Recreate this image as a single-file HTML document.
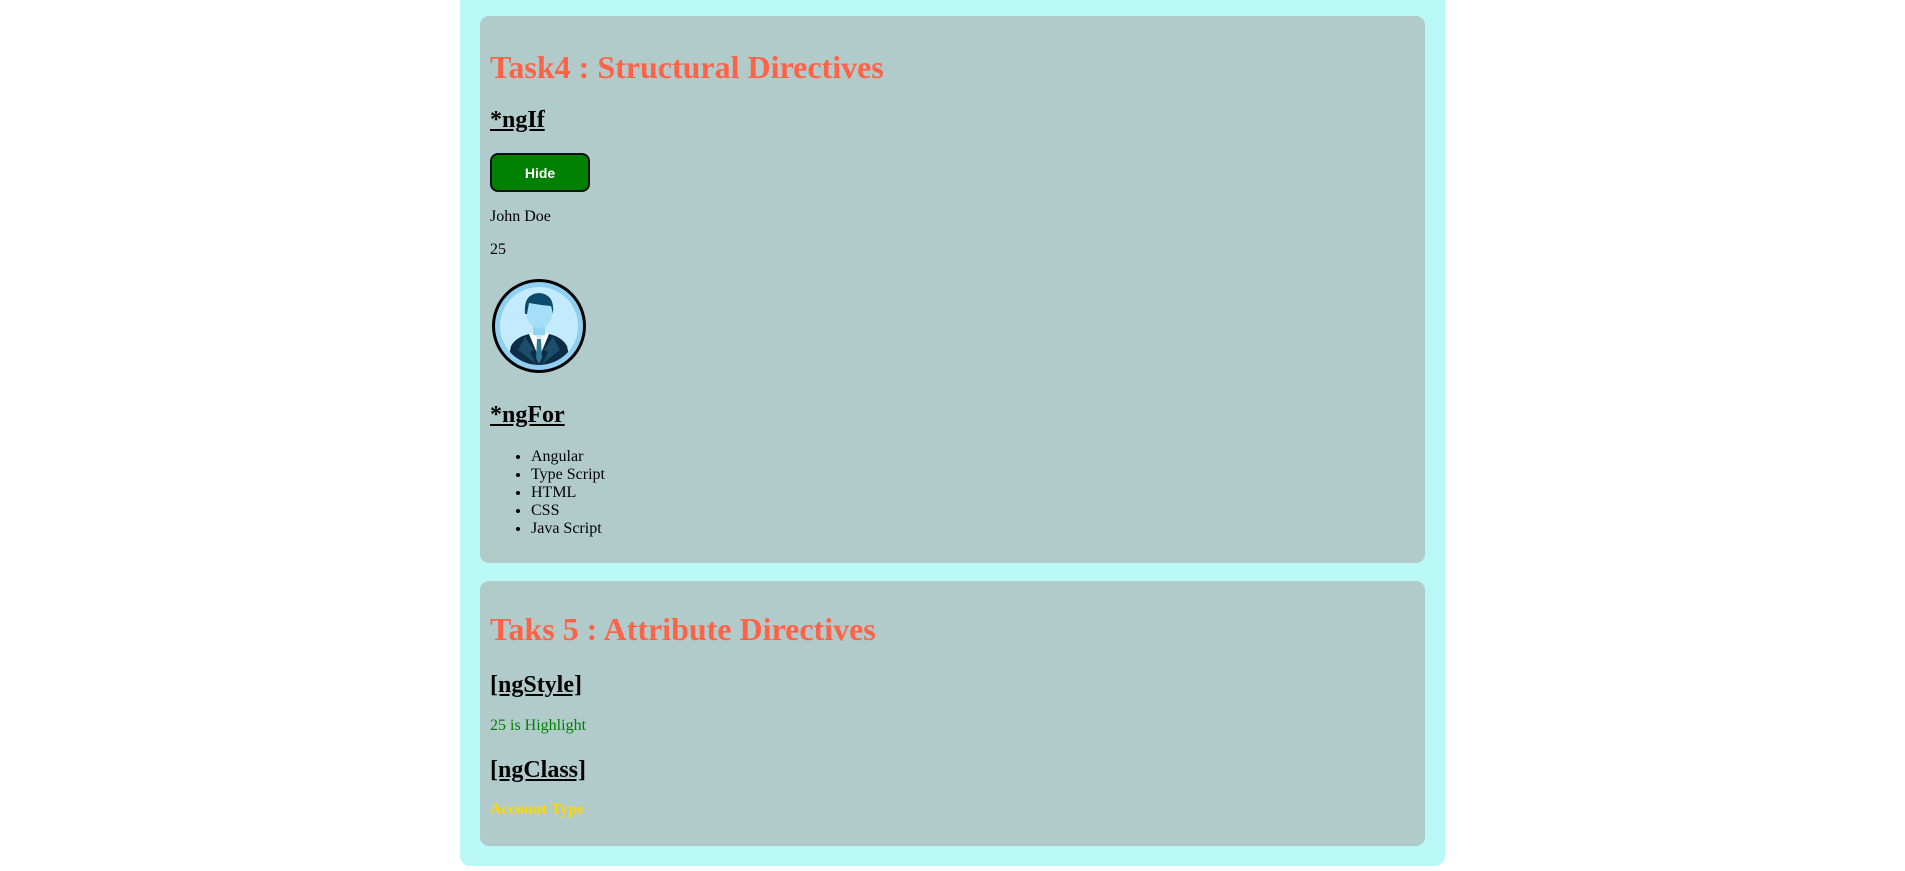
<!DOCTYPE html>
<html><head><meta charset="utf-8"><style>
body{margin:0;background:#fff;width:1905px;height:871px;position:relative;overflow:hidden;font-family:"Liberation Serif",serif;}
.outer{position:absolute;left:460px;top:0;width:985px;height:866px;background:#baf7f7;border-radius:0 0 10px 10px;}
.box{position:absolute;left:480px;width:945px;background:#b1cbcb;border-radius:9px;}
.t{position:absolute;left:490px;line-height:1;white-space:nowrap;margin:0;}
.h1{font-size:32px;font-weight:bold;color:#ff6347;}
.h2{font-size:24px;font-weight:bold;text-decoration:underline;color:#000;}
.p{font-size:16px;color:#000;}
.btn{position:absolute;left:490px;top:153px;width:100px;height:39px;box-sizing:border-box;background:#008000;border:2px solid #111;border-radius:8px;color:#fff;font:bold 14px "Liberation Sans",sans-serif;display:flex;align-items:center;justify-content:center;}
ul{position:absolute;left:490px;top:447.6px;margin:0;padding:0 0 0 41px;font-size:16px;line-height:18px;}
</style></head><body>
<div class="outer"></div>
<div class="box" style="top:16px;height:547px"></div>
<div class="box" style="top:581px;height:265px"></div>

<div class="t h1" style="top:51px">Task4 : Structural Directives</div>
<div class="t h2" style="top:108px">*ngIf</div>
<div class="btn">Hide</div>
<div class="t p" style="top:209px">John Doe</div>
<div class="t p" style="top:242px">25</div>
<svg style="position:absolute;left:490px;top:278px" width="100" height="96" viewBox="0 0 100 96">
<defs><clipPath id="c"><circle cx="49" cy="48" r="39"/></clipPath></defs>
<circle cx="49" cy="48" r="47" fill="#000"/>
<circle cx="49" cy="48" r="44" fill="#8fd0f0"/>
<circle cx="49" cy="48" r="39" fill="#c4ebfd"/>
<g clip-path="url(#c)">
<path d="M16 92 L21 68 Q26 59 39 56 L49 61 L59 56 Q72 59 77 68 L82 92 Z" fill="#0d2d45"/>
<path d="M39 56 L49 80 L59 56 L56 55 L49 61 L42 55 Z" fill="#fff"/>
<path d="M47 61 L51 61 L52 80 L49 86 L46 80 Z" fill="#2e7a95"/>
<path d="M35 59 L44 72 L40 74 L46 86 L28 72 Z" fill="#1c4d6b"/>
<path d="M63 59 L54 72 L58 74 L52 86 L70 72 Z" fill="#1c4d6b"/>
<rect x="43" y="44" width="12" height="13" fill="#92d3f0"/>
<ellipse cx="49" cy="35" rx="13" ry="15" fill="#a5dff7"/>
<path d="M35 36 Q33 16 49 15 Q65 16 63 36 L61 28 Q50 27 39 25 L37 36 Z" fill="#0b4a6a"/>
</g>
</svg>
<div class="t h2" style="top:403px">*ngFor</div>
<ul><li>Angular</li><li>Type Script</li><li>HTML</li><li>CSS</li><li>Java Script</li></ul>

<div class="t h1" style="top:613px">Taks 5 : Attribute Directives</div>
<div class="t h2" style="top:673px">[ngStyle]</div>
<div class="t p" style="top:718px;color:#008000">25 is Highlight</div>
<div class="t h2" style="top:758px">[ngClass]</div>
<div class="t p" style="top:802px;color:#ffd700;font-weight:bold">Account Type</div>
</body></html>
